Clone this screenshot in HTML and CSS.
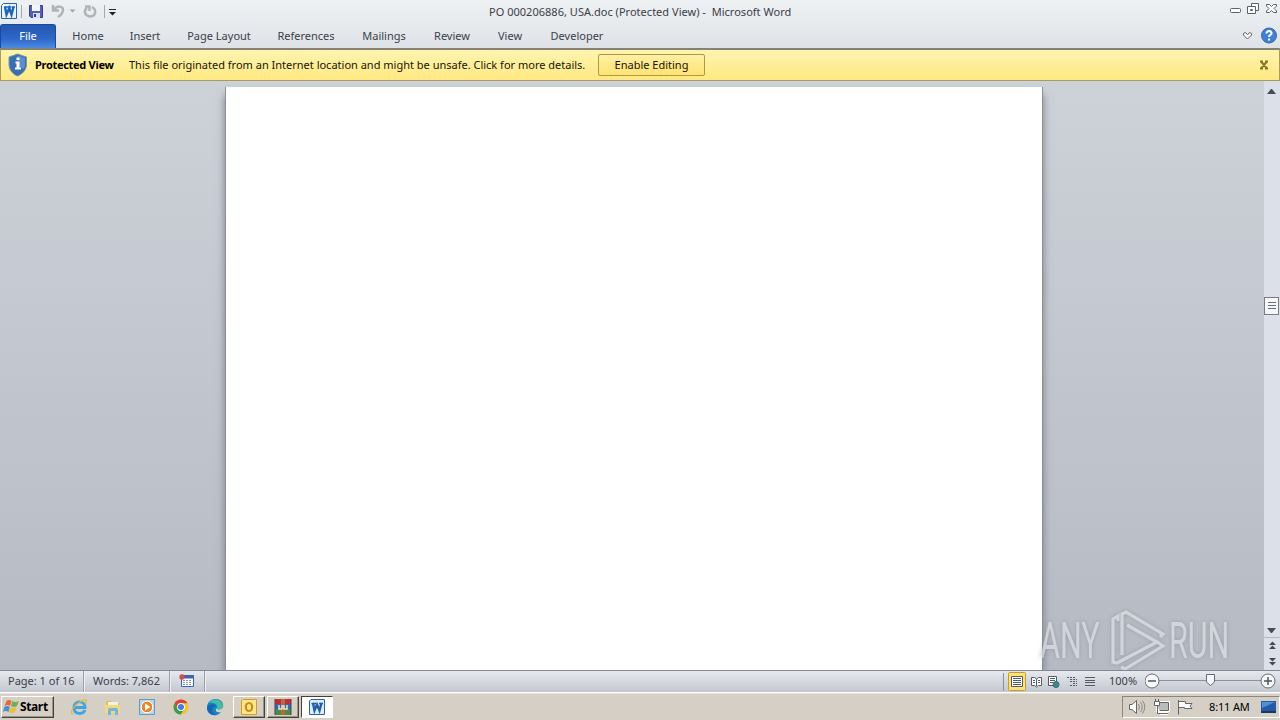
FILE: index.html
```html
<!DOCTYPE html>
<html lang="en">
<head>
  <meta charset="UTF-8">
  <title>PO 000206886, USA.doc (Protected View) - Microsoft Word</title>
  <link rel="stylesheet" href="styles.css">
</head>
<body>
  <header class="titlebar">
    <div class="quick">
      <svg width="120" height="24" viewBox="0 0 120 24">
        <path d="M3.500 3.500H16.500V18.500H1.500V5.500Z" fill="#e8f3fc" stroke="#2b62a4"/>
        <path d="M4 7H8M7 7H11M11.500 7H15" stroke="#1c66b5" stroke-width="1.500"/>
        <path d="M5 7L6.500 14.500L9.300 8L11.500 14.500L13.500 7" fill="none" stroke="#1c66b5" stroke-width="2.400"/>
        <path d="M21.500 5V18M104.500 5V18" stroke="#a5aab0"/>
        <path d="M29.500 5.500H42.500V17.500H31L29.500 16Z" fill="#5360b5" stroke="#39408a"/>
        <path d="M32 5H40V11H32Z" fill="#f3f6fc"/>
        <path d="M33 13H40V18H33Z" fill="#d8def0"/>
        <path d="M34 14H36V17H34Z" fill="#363d80"/>
        <path d="M53 5V10.500H59M54 10C57 5 63 6 63 10C63 13 61 15 58 17" fill="none" stroke="#b0b3b8" stroke-width="2.500"/>
        <path d="M69.500 9.500H75.500L72.500 12.500Z" fill="#a0a4aa"/>
        <path d="M87 8C83 11 85 16 90 16.500C96 16 97 10 92 7M85 6.500H89.500V11" fill="none" stroke="#b0b3b8" stroke-width="2.500"/>
        <path d="M109 9.500H116" stroke="#222"/>
        <path d="M109 12H116L112.500 15.500Z" fill="#222"/>
      </svg>
    </div>
    <div class="title">PO 000206886, USA.doc (Protected View) -&nbsp; Microsoft Word</div>
    <svg class="window-buttons" width="56" height="24" viewBox="0 0 56 24" fill="none" stroke="#5b6067">
      <rect x="6.500" y="8.500" width="10" height="4" rx="1" fill="#fff"/>
      <path d="M27.500 7V3.500H34.500V10.500H31.500M23.500 6.500H31.500V13.500H23.500ZM26.500 9.500H28.500V10.500H26.500Z" fill="#fff"/>
      <path d="M42.500 4.500H45.500L47.500 6.500L49.500 4.500H52.500V6L50 8.500L52.500 11V12.500H49.500L47.500 10.500L45.500 12.500H42.500V11L45 8.500L42.500 6Z" fill="#fff"/>
    </svg>
  </header>

  <nav class="ribbon">
    <a class="file">File</a>
    <a>Home</a>
    <a>Insert</a>
    <a>Page Layout</a>
    <a>References</a>
    <a>Mailings</a>
    <a>Review</a>
    <a>View</a>
    <a>Developer</a>
    <svg class="ribbon-tools" width="42" height="24" viewBox="0 0 42 24">
      <path d="M5.500 9.500L7 8.500L9.500 10.500L12 8.500L13.500 9.500V11L9.500 15L5.500 11Z" fill="#fff" stroke="#5b6067"/>
      <circle cx="31" cy="11.500" r="7.500" fill="#4280d0" stroke="#3568ae"/>
      <path d="M28.500 9.500C28.500 6 34 6.500 33.500 9.500C33.300 11 31 11 31 13M31 14.500V16.500" fill="none" stroke="#fff" stroke-width="2"/>
    </svg>
  </nav>

  <section class="message">
    <svg width="20" height="24" viewBox="0 0 20 24">
      <path d="M10.500 1L19.500 4V11C19.500 17 15.500 21 10.500 23C5.500 21 2 17 2 11V4Z" fill="#376fb2" stroke="#8095a0"/>
      <path d="M10.500 2.500L18 5V11C18 13 17.500 14.500 16.500 16L10.500 12Z" fill="#5a90ce"/>
      <path d="M9.500 4.500H12.500V7H9.500ZM8.500 8.500H12.500V14.500H14V16.500H8V14.500H9.500V10.500H8.500Z" fill="#fff"/>
    </svg>
    <b>Protected View</b>
    <span class="details">This file originated from an Internet location and might be unsafe. Click for more details.</span>
    <button>Enable Editing</button>
    <svg class="dismiss" width="10" height="10" viewBox="0 0 10 10">
      <path d="M1 1.500H4M6 1.500H9M1 8.500H4M6 8.500H9M2 1.500L8 8.500M8 1.500L2 8.500" stroke="#8a7526" stroke-width="2"/>
    </svg>
  </section>

  <main class="workspace">
    <div class="page"></div>
    <div class="scrollbar">
      <i class="arrow up"></i>
      <svg class="thumb" width="15" height="18" viewBox="0 0 15 18">
        <rect x=".5" y=".5" width="14" height="17" fill="#f5f7fa" stroke="#777c85"/>
        <path d="M4 5.500H12M4 8.500H12M4 11.500H12" stroke="#686e77"/>
      </svg>
      <i class="arrow down"></i>
      <svg class="browse" width="16" height="33" viewBox="0 0 16 33">
        <path d="M0 .5H16" stroke="#b4b9c1"/>
        <path d="M5 8L8.500 4.500L12 8ZM5 12L8.500 8.500L12 12ZM5 21L8.500 24.500L12 21ZM5 25L8.500 28.500L12 25Z" fill="#454a52"/>
      </svg>
    </div>
    <div class="watermark">
      <span>ANY</span>
      <svg width="58" height="62" viewBox="0 0 58 62" fill="none">
        <path d="M9 11V6L4 9V52L8 53L48 32L18 15M13 45V4L17 2L54 24L51 27M12 57L16 59L54 36L48 32" stroke="#e1e4e8" stroke-width="3.200"/>
      </svg>
      <span class="run">RUN</span>
    </div>
  </main>

  <footer class="status">
    <span class="pages">Page: 1 of 16</span>
    <span class="words">Words: 7,862</span>
    <span class="macro">
      <svg width="16" height="14" viewBox="0 0 16 14">
        <path d="M2.500 1.500H14.500V12.500H2.500Z" fill="#fff" stroke="#3f62ad"/>
        <path d="M3 3H15" stroke="#3f62ad" stroke-width="3"/>
        <path d="M4 6.500H13M4 8.500H13M4 10.500H13" stroke="#7891c6" stroke-dasharray="2 1"/>
        <circle cx="3" cy="3" r="2.700" fill="#cd5346"/>
      </svg>
    </span>
    <svg class="views" width="98" height="22" viewBox="0 0 98 22" fill="none" stroke="#555b64">
      <path d="M.5 2V20" stroke="#8b9099"/>
      <rect x="5.500" y="1.500" width="17" height="18" rx="1" fill="#fce27a" stroke="#c29b3d"/>
      <path d="M8.500 5.500H19.500V15.500H8.500Z" fill="#fff"/>
      <path d="M10 7.500H18M10 9.500H18M10 11.500H18M10 13.500H18"/>
      <path d="M28.500 6.500H31.500L33.500 8L35.500 6.500H38.500V14.500H35.500L33.500 16L31.500 14.500H28.500ZM33.500 8V15" fill="#fff"/>
      <path d="M30 9.500H32M30 11.500H32M35 9.500H37M35 11.500H37"/>
      <path d="M45.500 5.500H53.500V14.500H45.500Z" fill="#fff"/>
      <path d="M47 7.500H52M47 9.500H52M47 11.500H50"/>
      <circle cx="53" cy="13.500" r="3" fill="#3a8b78" stroke="#34668d"/>
      <path d="M64 6.500H72M67 8.500H74M67 10.500H74M70 12.500H74M67 14.500H74" stroke-dasharray="2 1"/>
      <path d="M82 6.500H92M82 9.500H92M82 11.500H92M82 14.500H92"/>
    </svg>
    <span class="percent">100%</span>
    <svg class="zoom" width="134" height="22" viewBox="0 0 134 22" fill="none" stroke="#656b74">
      <path d="M14 9.500H117" stroke="#8c929b"/>
      <circle cx="7" cy="10" r="7" fill="#f7f8fa"/>
      <circle cx="123" cy="10" r="7" fill="#f7f8fa"/>
      <path d="M3 10H11M119 10H127M123 6V14" stroke="#50565f" stroke-width="1.500"/>
      <path d="M61.500 3.500H69.500V11L65.500 14.500L61.500 11Z" fill="#f5f7fa"/>
    </svg>
  </footer>

  <footer class="taskbar">
    <div class="start">
      <svg width="18" height="16" viewBox="0 0 17 16">
        <path d="M4 2Q6 0 9 2L7.500 7Q5 5 2 7Z" fill="#e7673d"/>
        <path d="M10 2Q13 4 16.500 2L14.500 7Q11 9 8.500 7Z" fill="#70b34d"/>
        <path d="M1.800 8Q5 6 7.200 8L6 13Q3 11 .5 13Z" fill="#4a8bd1"/>
        <path d="M8.200 8Q11 10 14.200 8L12.500 13Q9 15 6.800 13Z" fill="#efbd3c"/>
      </svg>
      <b>Start</b>
    </div>
    <div class="launch">
      <svg width="18" height="18" viewBox="0 0 18 18" fill="none">
        <path d="M15 12C13 17 4 17 4 9.500C4 2 15 2 15 9.500H5" stroke="#3da5df" stroke-width="2.800"/>
        <path d="M3 16C-1 15 4 7 10 4C15 1 18 1 15.500 6" stroke="#e5b83d" stroke-width="1.300"/>
      </svg>
      <svg width="18" height="18" viewBox="0 0 18 18">
        <path d="M2 3H7L8 5H15V15H2Z" fill="#e3bf58"/>
        <path d="M4 4H14V10H4Z" fill="#f5f5df"/>
        <path d="M1 7H16V15H1Z" fill="#f2d97e"/>
        <path d="M4 17V12Q4 10 6 10H12Q14 10 14 12V17H11V13H7V17Z" fill="#77b7d9"/>
      </svg>
      <svg width="18" height="18" viewBox="0 0 18 18">
        <path d="M1.500 1.500H16.500V16.500H1.500Z" fill="#b6d8ee" stroke="#6699bd"/>
        <circle cx="9" cy="9" r="5.800" fill="#ed8521" stroke="#fff"/>
        <path d="M7 5.500L12.500 9L7 12.500Z" fill="#fff"/>
      </svg>
      <svg width="18" height="18" viewBox="0 0 18 18">
        <circle cx="9" cy="9" r="7.500" fill="#f2c42f"/>
        <path d="M2.500 5.250A7.500 7.500 0 0 1 15.500 5.250H9L5.800 11Z" fill="#dd4035"/>
        <path d="M2.500 5.250A7.500 7.500 0 0 0 8.700 16.500L12.200 10.900L9 13L5.800 11Z" fill="#3a9b4b"/>
        <circle cx="9" cy="9" r="3.900" fill="#fff"/>
        <circle cx="9" cy="9" r="3" fill="#3c7edb"/>
      </svg>
      <svg width="18" height="18" viewBox="0 0 18 18">
        <path d="M1 10C1 3 6 1 10 1C15 1 18 5 17 9C16 12 11 12 10 10C9 14 12 15 15 14C10 20 1 17 1 10Z" fill="#1683c7"/>
        <path d="M3 5C7-1 16 1 17 8C17 12 11 12 11 10C12 6 7 4 3 5Z" fill="#45bda6"/>
        <path d="M7 9C5 12 7 17 12 17C4 18 1 14 1 9C3 6 8 5 10 8Z" fill="#1767b0"/>
      </svg>
    </div>
    <div class="task">
      <svg width="18" height="18" viewBox="0 0 18 18">
        <path d="M3 1.500H16.500V16.500H1.500V3Z" fill="#ffe68a" stroke="#d59b22"/>
        <ellipse cx="9" cy="9" rx="3.200" ry="4" fill="none" stroke="#cd8c13" stroke-width="2.200"/>
      </svg>
    </div>
    <div class="task">
      <svg width="18" height="18" viewBox="0 0 18 18">
        <path d="M1 1H17V6H1Z" fill="#c02c3b"/>
        <path d="M1 6H17V11H1Z" fill="#3b65b2"/>
        <path d="M1 11H17V17H1Z" fill="#438d48"/>
        <path d="M7 1H11V17H7Z" fill="#b56a37"/>
        <path d="M5 7V11H8V8H10V11H13V7" fill="none" stroke="#eee5c8" stroke-width="1.500"/>
        <path d="M1 1V17M17 1V17" stroke="#533f4b"/>
      </svg>
    </div>
    <div class="task active">
      <svg width="18" height="18" viewBox="0 0 18 18">
        <path d="M3 1.500H16.500V16.500H1.500V3Z" fill="#dcedfb" stroke="#2b62a4"/>
        <path d="M3.500 5.500H8M11 5.500H15" stroke="#235ca8" stroke-width="1.500"/>
        <path d="M5 5L6.500 12.500L9 6.500L11.500 12.500L13.500 5" fill="none" stroke="#235ca8" stroke-width="2.400"/>
      </svg>
    </div>
    <div class="tray">
      <svg width="76" height="20" viewBox="0 0 76 20" fill="none" stroke="#666">
        <path d="M6.500 7.500H9L13.500 3.500V16.500L9 12.500H6.500Z" fill="#fff"/>
        <path d="M15.500 7Q17.500 10 15.500 13M17.500 5Q21 10 17.500 15M19.500 3.500Q24 10 19.500 16.500" stroke="#8a8a8a"/>
        <path d="M34.500 5.500H45.500V13.500H34.500ZM37 16.500H45" fill="#b9bebd" stroke="#fff" stroke-width="3"/>
        <path d="M34.500 5.500H45.500V13.500H34.500ZM37 16.500H45" fill="#b9bebd"/>
        <path d="M31.500 4.500H36.500V8.500H31.500ZM32.500 2V4M35.500 2V4M34.500 9V16.500H38" fill="#fff"/>
        <path d="M55.500 3V17.500M56 4.500H62.500V6.500H69L67 9L69 11.500H61.500V10.500H56" fill="#fff"/>
      </svg>
      <span class="clock">8:11 AM</span>
      <svg class="desktop" width="17" height="16" viewBox="0 0 17 16">
        <path d="M1 2H16V12H1Z" fill="#235ba8"/>
        <path d="M2 3H15L2 9Z" fill="#4e91d9"/>
        <path d="M1 12H16V14H1Z" fill="#17395f"/>
      </svg>
    </div>
  </footer>
</body>
</html>
```
FILE: styles.css
```css
* {
  box-sizing: border-box;
}
body {
  margin: 0;
  width: 1280px;
  height: 720px;
  overflow: hidden;
  display: flex;
  flex-direction: column;
  font: 11px/16px "Noto Sans", "Open Sans", sans-serif;
  color: #3b4047;
  background: linear-gradient(#eef1f4, #dfe3e7 48px);
}
svg {
  display: block;
  flex: none;
}
span, b, a {
  white-space: nowrap;
}

.titlebar {
  height: 24px;
  display: grid;
  grid-template-columns: 489px 1fr 56px;
}
.title {
  line-height: 24px;
  letter-spacing: 0.02px;
}

.ribbon {
  height: 24px;
  display: grid;
  grid-template-columns: 56px 64px 50px 98px 76px 80px 56px 60px 74px 1fr;
  line-height: 24px;
  text-align: center;
}
.file {
  color: #fff;
  border: 1px solid #174ba2;
  border-bottom: 0;
  border-radius: 3px 3px 0 0;
  background: linear-gradient(#2458b0, #2e67c7 60%, #4c8ce2);
  line-height: 22px;
}
.ribbon-tools {
  justify-self: end;
}

.message {
  height: 33px;
  border: 1px solid #a89b5b;
  border-top: 2px solid #858373;
  background: linear-gradient(#fff4b0, #ffe982);
  display: flex;
  align-items: center;
  padding-left: 6px;
  color: #17150a;
}
.message svg {
  margin-top: -1px;
}
.message b {
  margin-left: 8px;
  width: 94px;
  color: #000;
  letter-spacing: -0.3px;
}
.details {
  width: 469px;
}
.message button {
  width: 107px;
  height: 22px;
  padding: 0;
  border: 1px solid #b09846;
  border-radius: 2px;
  background: linear-gradient(#fff0a5, #ffe372);
  font: inherit;
  color: #17150a;
}
.dismiss {
  margin-left: auto;
  margin-right: 10px;
}

.workspace {
  flex: 1;
  position: relative;
  display: flex;
  padding: 6px 0 0 225px;
  background: linear-gradient(#cdd1d8, #b6bac3);
  overflow: hidden;
}
.page {
  width: 818px;
  background: #fff;
  border: solid #8b8f97;
  border-width: 0 1px;
  box-shadow: 0 8px 8px #777c85;
}
.scrollbar {
  width: 16px;
  margin: -6px 0 0 auto;
  background: #dce1e9;
  display: flex;
  flex-direction: column;
}
.arrow {
  width: 9px;
  margin-left: 3px;
  border: 4px solid transparent;
}
.up {
  border-top: 0;
  border-bottom: 5px solid #484d55;
  margin-top: 8px;
  margin-bottom: 203px;
}
.down {
  border-bottom: 0;
  border-top: 5px solid #484d55;
  margin-top: auto;
  margin-bottom: 4px;
}
.watermark {
  position: absolute;
  left: 1040px;
  bottom: -2px;
  display: flex;
  align-items: center;
  opacity: 0.65;
  color: #e1e4e8;
  filter: drop-shadow(0 0 2px #888d95);
}
.watermark span {
  font: 50px/60px Roboto, sans-serif;
  width: 104px;
  margin-right: -35px;
  transform: scaleX(0.61);
  transform-origin: left;
}
.watermark .run {
  margin: 0 0 0 2px;
}

.status {
  height: 23px;
  border-top: 1px solid #858991;
  border-bottom: 1px solid #fff;
  background: linear-gradient(#e6e9ee, #c3c7cf);
  display: flex;
  line-height: 20px;
}
.pages, .words, .macro {
  border-right: 1px solid #9ca1aa;
  box-shadow: 1px 0 #eceef2;
}
.pages {
  width: 84px;
  padding-left: 8px;
}
.words {
  width: 86px;
  padding-left: 9px;
}
.macro {
  width: 35px;
  padding: 3px 0 0 9px;
}
.views {
  margin-left: auto;
}
.percent {
  width: 43px;
  padding-left: 8px;
}
.zoom {
  margin-left: 1px;
  margin-right: 1px;
}

.taskbar {
  height: 27px;
  border-top: 1px solid #e8e3da;
  background: #d5cfc5;
  display: flex;
  padding: 2px 0 2px 1px;
  color: #000;
}
.start {
  width: 53px;
  border: 1px solid;
  border-color: #fff #45423e #45423e #fff;
  box-shadow: inset -1px -1px #99948b;
  display: flex;
  align-items: center;
}
.start b {
  font: bold 12px/16px "Open Sans", sans-serif;
  letter-spacing: -0.4px;
}
.launch {
  display: flex;
  gap: 16px;
  align-items: center;
  margin-left: 16px;
  width: 163px;
}
.task {
  width: 32px;
  margin-right: 2px;
  border: 1px solid;
  border-color: #fff #45423e #45423e #fff;
  box-shadow: inset -1px -1px #99948b;
  display: grid;
  place-items: center;
}
.active {
  background: #fff;
  border-color: #45423e #fff #fff #45423e;
  box-shadow: none;
}
.tray {
  margin-left: auto;
  width: 158px;
  border: 1px solid;
  border-color: #8c877d #fff #fff #8c877d;
  display: flex;
  align-items: center;
}
.clock {
  margin-left: 10px;
  letter-spacing: -0.15px;
}
.desktop {
  margin-left: auto;
  margin-right: 2px;
}
```
